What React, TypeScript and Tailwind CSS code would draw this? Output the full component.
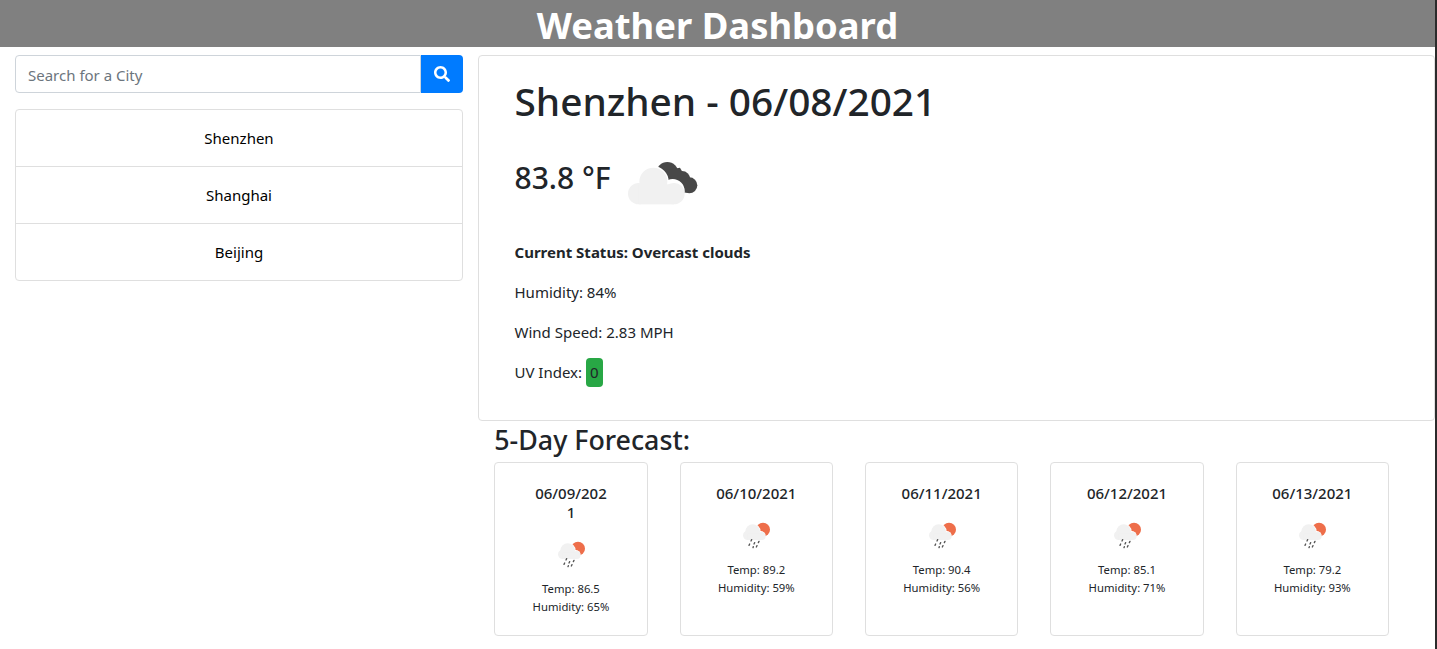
import React from 'react';
import { FaSearch } from 'react-icons/fa';

const cities = ['Shenzhen', 'Shanghai', 'Beijing'];

const forecast = [
  { date: '06/09/202\n1', temp: '86.5', humidity: '65%' },
  { date: '06/10/2021', temp: '89.2', humidity: '59%' },
  { date: '06/11/2021', temp: '90.4', humidity: '56%' },
  { date: '06/12/2021', temp: '85.1', humidity: '71%' },
  { date: '06/13/2021', temp: '79.2', humidity: '93%' },
];

function CloudsIcon() {
  return (
    <svg width="100" height="100" viewBox="0 0 300 300" className="shrink-0">
      <g fill="#484848">
        <circle cx="172" cy="96" r="33" />
        <circle cx="216" cy="115" r="25" />
        <circle cx="238" cy="133" r="24" />
        <path d="M150 90l60-10 40 70-30 6z" />
      </g>
      <g fill="#ffffff" stroke="#ffffff" strokeWidth="8">
        <circle cx="130" cy="122" r="42" />
        <circle cx="188" cy="150" r="32" />
      </g>
      <g fill="#f1f1f1">
        <circle cx="130" cy="122" r="42" />
        <circle cx="86" cy="158" r="32" />
        <circle cx="192" cy="158" r="32" />
        <rect x="86" y="130" width="106" height="60" />
      </g>
    </svg>
  );
}

function RainIcon() {
  return (
    <svg width="50" height="50" viewBox="4 0 150 150">
      <circle cx="100" cy="56" r="21" fill="#ee6e4a" />
      <circle cx="69" cy="62" r="24" fill="#ffffff" />
      <circle cx="93" cy="74" r="14" fill="#ffffff" />
      <g fill="#f1f1f1">
        <circle cx="69" cy="62" r="22" />
        <circle cx="54" cy="73" r="14" />
        <circle cx="96" cy="75" r="12" />
        <rect x="54" y="68" width="42" height="19" />
      </g>
      <g stroke="#555555" strokeWidth="4" strokeLinecap="round">
        <path d="M66 86l-2 4" />
        <path d="M60 99l-2 4" />
        <path d="M75 95l-2 4" />
        <path d="M71 107l-1 3" />
        <path d="M88 91l-2 4" />
        <path d="M82 104l-2 4" />
      </g>
    </svg>
  );
}

export default function App() {
  return (
    <div className="flex min-h-screen bg-[#2b2b2b]">
      <div className="w-[1435px] shrink-0 overflow-hidden bg-white font-['Noto_Sans',sans-serif] text-[#212529]">
        <header className="h-[47px] bg-[#808080] text-center text-[36.400px] font-bold leading-[50px] text-white">
          Weather Dashboard
        </header>
        <main className="flex">
          <aside className="w-[478px] shrink-0 px-[15px] pt-2">
            <div className="flex h-[38px]">
              <input
                placeholder="Search for a City"
                className="min-w-0 flex-1 rounded-l border border-[#ced4da] px-3 pt-0.5 text-[15px] placeholder:text-[#6c757d]"
              />
              <button className="flex w-[42px] items-center justify-center rounded-r bg-[#007bff] text-white">
                <FaSearch size={16} />
              </button>
            </div>
            <ul className="mt-4 rounded border border-[#dfdfdf]">
              {cities.map((city) => (
                <li
                  key={city}
                  className="flex h-[57px] items-center justify-center border-b border-[#dfdfdf] text-[15px] text-black last:h-[56px] last:border-b-0"
                >
                  {city}
                </li>
              ))}
            </ul>
          </aside>
          <section className="min-w-0 flex-1 pt-2">
            <div className="h-[366px] rounded border border-[#dfdfdf] pl-[35.500px] pt-[18px]">
              <h2 className="text-[38.800px] font-medium leading-[54px]">Shenzhen - 06/08/2021</h2>
              <div className="mt-[17px] flex h-[64px] items-center">
                <span className="text-[30px] font-medium">83.8 °F</span>
                <div className="relative h-[64px] w-[80px]">
                  <div className="absolute left-[-1px] top-[-4px]">
                    <CloudsIcon />
                  </div>
                </div>
              </div>
              <p className="mt-[31px] text-[15px] font-bold leading-[24px]">Current Status: Overcast clouds</p>
              <p className="mt-4 text-[15px] leading-[24px]">Humidity: 84%</p>
              <p className="mt-4 text-[15px] leading-[24px]">Wind Speed: 2.83 MPH</p>
              <p className="mt-[14px] text-[15px] leading-[24px]">
                UV Index: <span className="inline-block h-[29px] rounded bg-[#28a745] px-1 leading-[29px]">0</span>
              </p>
            </div>
            <div className="pl-[16.300px]">
              <h3 className="text-[26.800px] font-medium leading-[38px]">5-Day Forecast:</h3>
              <div className="mt-[3px] flex gap-[32px]">
                {forecast.map((day) => (
                  <div
                    key={day.date}
                    className="flex h-[174px] w-[153.350px] flex-col items-center rounded border border-[#dfdfdf] pt-[21px] text-center"
                  >
                    <div className="whitespace-pre-line text-[15px] font-medium leading-[19px]">{day.date}</div>
                    <div className="mt-[8px] h-[50px]">
                      <RainIcon />
                    </div>
                    <div className="text-[11.300px] leading-[18px]">
                      <p>Temp: {day.temp}</p>
                      <p>Humidity: {day.humidity}</p>
                    </div>
                  </div>
                ))}
              </div>
            </div>
          </section>
        </main>
      </div>
    </div>
  );
}
